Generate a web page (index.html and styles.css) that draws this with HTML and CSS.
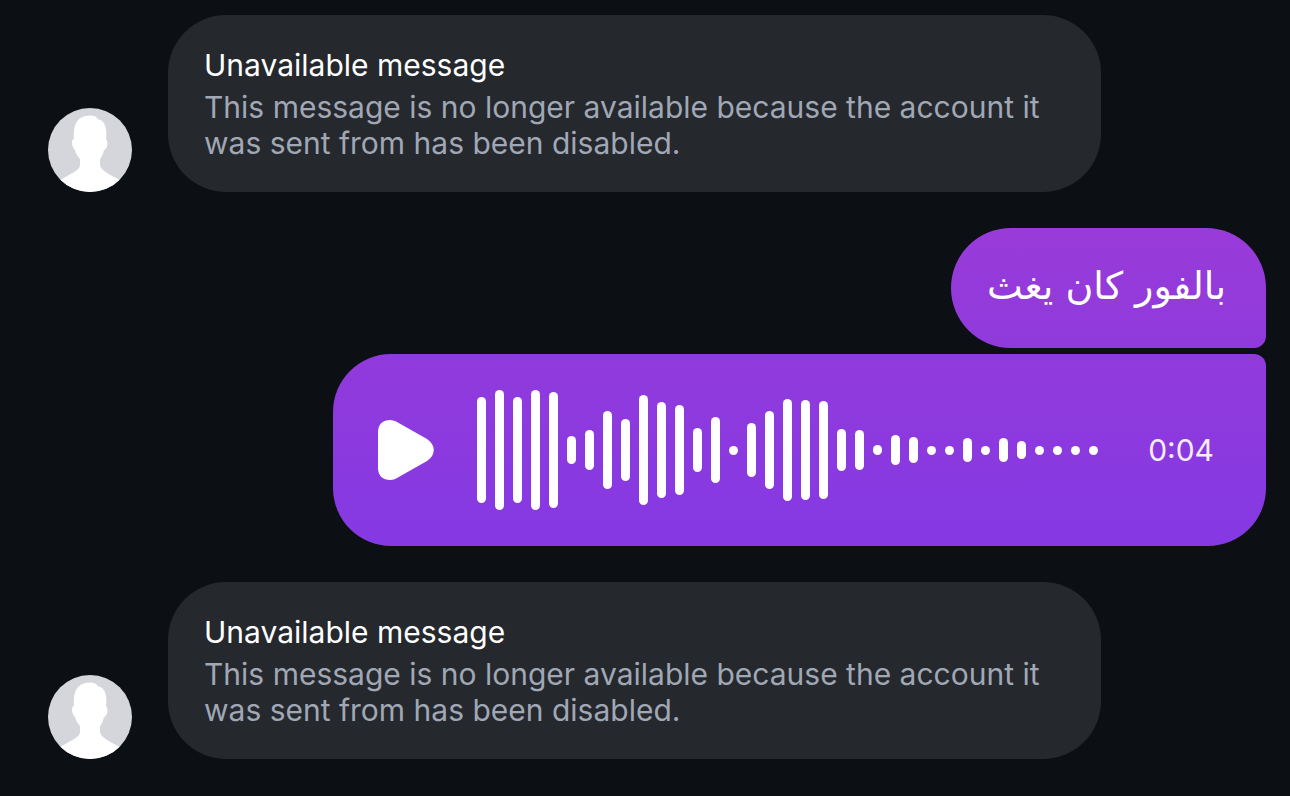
FILE: index.html
```html
<!DOCTYPE html>
<html lang="en">
<head>
  <meta charset="UTF-8">
  <meta name="viewport" content="width=device-width, initial-scale=1.0">
  <title>Messages</title>
  <link rel="stylesheet" href="styles.css">
</head>
<body>
  <main class="thread">
    <div class="row">
      <svg class="avatar" viewBox="0 0 84 84" role="img" aria-label="Profile picture">
        <path class="person" d="M14 71 C20 67 28 64 31 60 C32.500 58 32 54 32 51 C30 49 28 46 27 42 C25 41 24 37 24 34 C24 32 25 31 26 31 C25 18 28 8 42 7.500 C46 7.500 49 9 50 11.500 C55 10.500 60 19 58 31 C59 32 59.500 34 59.500 36 C59 40 57 42 56 42 C55 46 54 49 52 51 L52 57 C53 63 63 67 70 71 L84 84 H0 Z"/>
      </svg>
      <div class="bubble received">
        <p class="title">Unavailable message</p>
        <p class="note">This message is no longer available because the account it was sent from has been disabled.</p>
      </div>
    </div>

    <div class="sent-group">
      <div class="bubble sent text" lang="ar" dir="rtl">بالفور كان يغث</div>
      <div class="bubble sent voice">
        <button class="play" type="button" aria-label="Play voice message">
          <svg viewBox="0 0 56 62" width="56" height="62">
            <path d="M0 13 C0 5 5 1 12 1 C15 1 17 2 19 3 L49 20 C58 26 58 36 49 42 L19 59 C17 60 15 61 12 61 C5 61 0 57 0 49 Z"/>
          </svg>
        </button>
        <div class="wave" id="wave"></div>
        <span class="time">0:04</span>
      </div>
    </div>

    <div class="row">
      <svg class="avatar" viewBox="0 0 84 84" role="img" aria-label="Profile picture">
        <path class="person" d="M14 71 C20 67 28 64 31 60 C32.500 58 32 54 32 51 C30 49 28 46 27 42 C25 41 24 37 24 34 C24 32 25 31 26 31 C25 18 28 8 42 7.500 C46 7.500 49 9 50 11.500 C55 10.500 60 19 58 31 C59 32 59.500 34 59.500 36 C59 40 57 42 56 42 C55 46 54 49 52 51 L52 57 C53 63 63 67 70 71 L84 84 H0 Z"/>
      </svg>
      <div class="bubble received">
        <p class="title">Unavailable message</p>
        <p class="note">This message is no longer available because the account it was sent from has been disabled.</p>
      </div>
    </div>
  </main>

  <script>
    const levels = [106, 120, 106, 120, 116, 28, 40, 78, 62, 110, 96, 90, 44, 66, 9, 54, 78, 102,
      100, 98, 42, 40, 10, 30, 26, 9, 9, 24, 9, 24, 18, 9, 9, 9, 9];
    const wave = document.getElementById("wave");

    levels.forEach((level) => {
      const bar = document.createElement("span");
      bar.className = "bar";
      bar.style.height = level + "px";
      wave.appendChild(bar);
    });
  </script>
</body>
</html>
```
FILE: styles.css
```css
body {
  margin: 0;
  background-color: #0c1014;
  color: #ffffff;
  font-family: Inter, "DejaVu Sans", sans-serif;
  font-size: 30px;
  line-height: 36px;
}
p {
  margin: 0;
}
.thread {
  display: flex;
  flex-direction: column;
  gap: 36px;
  padding: 15px 24px 36px 48px;
}
.row {
  display: flex;
  align-items: flex-end;
  gap: 36px;
}
.avatar {
  flex: none;
  width: 84px;
  height: 84px;
  border-radius: 50%;
  background-color: #d5d6dc;
}
.person {
  fill: #ffffff;
}
.bubble {
  box-sizing: border-box;
  border-radius: 58px;
}
.received {
  max-width: 933px;
  padding: 32px 36px 31px;
  background-color: #25282d;
}
.note {
  margin-top: 6px;
  color: #a0a7b5;
}
.sent-group {
  display: flex;
  flex-direction: column;
  align-items: flex-end;
  gap: 6px;
}
.text {
  padding: 28px 40px 32px 36px;
  border-radius: 60px 60px 12px 60px;
  background: linear-gradient(#993bd9, #903adc);
  font-family: "DejaVu Sans", sans-serif;
  font-size: 38px;
  line-height: 60px;
}
.voice {
  display: flex;
  align-items: center;
  width: 100%;
  max-width: 933px;
  padding: 36px 52px 36px 45px;
  border-radius: 58px 12px 58px 58px;
  background: linear-gradient(#913adc, #8539e3);
}
.play {
  display: flex;
  margin-right: 43px;
  padding: 0;
  border: none;
  background: none;
  cursor: pointer;
}
.play path {
  fill: #ffffff;
}
.wave {
  display: flex;
  align-items: center;
  gap: 9px;
  height: 120px;
}
.bar {
  width: 9px;
  border-radius: 5px;
  background-color: #ffffff;
}
.time {
  margin-left: auto;
  color: #f6eefc;
}
```
